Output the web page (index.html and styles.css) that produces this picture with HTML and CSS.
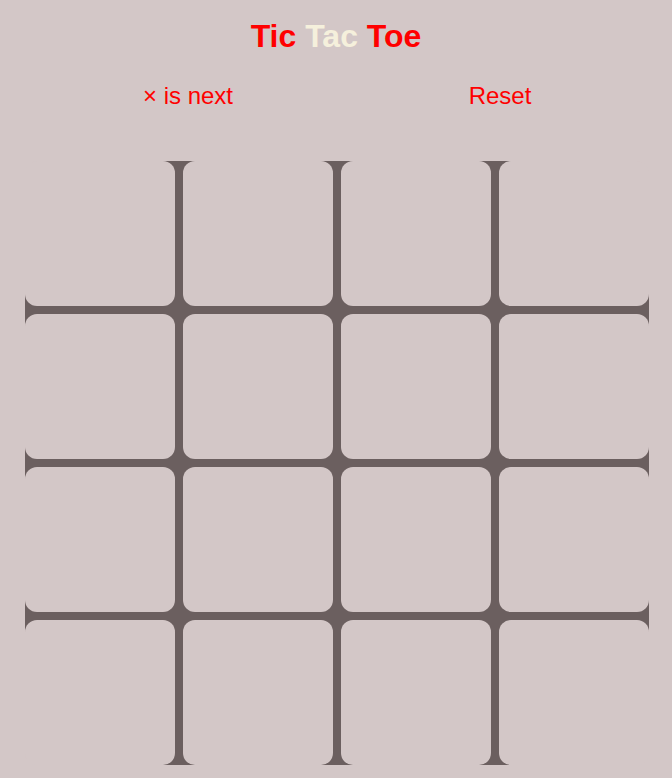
FILE: index.html
```html
<!DOCTYPE html>
<html lang="en">
<head>
    <meta charset="UTF-8">
    <meta name="viewport" content="width=device-width, initial-scale=1.0">
    <title>Tic Tac Toe</title>
    <link rel="stylesheet" href="styles.css">
</head>
<body>
    <h1 class="title"><span class="red">Tic</span> <span class="beige">Tac</span> <span class="red">Toe</span></h1>
    <div class="status">
        <div class="next">× is next</div>
        <div class="reset">Reset</div>
    </div>
    <div class="board">
        <div class="cell"></div>
        <div class="cell"></div>
        <div class="cell"></div>
        <div class="cell"></div>
        <div class="cell"></div>
        <div class="cell"></div>
        <div class="cell"></div>
        <div class="cell"></div>
        <div class="cell"></div>
        <div class="cell"></div>
        <div class="cell"></div>
        <div class="cell"></div>
        <div class="cell"></div>
        <div class="cell"></div>
        <div class="cell"></div>
        <div class="cell"></div>
    </div>
</body>
</html>
```

FILE: styles.css
```css
body {
    font-family: "Liberation Sans", Arial, sans-serif;
    background-color: #d3c7c7;
    margin: 0;
    padding: 0;
}
.title {
    font-size: 32px;
    font-weight: bold;
    text-align: center;
    margin: 18px 0 0 0;
}
.red {
    color: #ff0000;
}
.beige {
    color: #f5f0dc;
}
.status {
    display: grid;
    grid-template-columns: 312px 312px;
    margin: 27px 0 0 32px;
    font-size: 24px;
    color: #ff0000;
    text-align: center;
}
.reset {
    cursor: pointer;
}
.board {
    display: grid;
    grid-template-columns: repeat(4, 150px);
    grid-template-rows: repeat(4, 145px);
    gap: 8px;
    width: 624px;
    margin: 51px 0 0 25px;
    background-color: #6b5f5f;
    border-radius: 20px;
}
.cell {
    background-color: #d3c7c7;
    border-radius: 12px;
}
```
